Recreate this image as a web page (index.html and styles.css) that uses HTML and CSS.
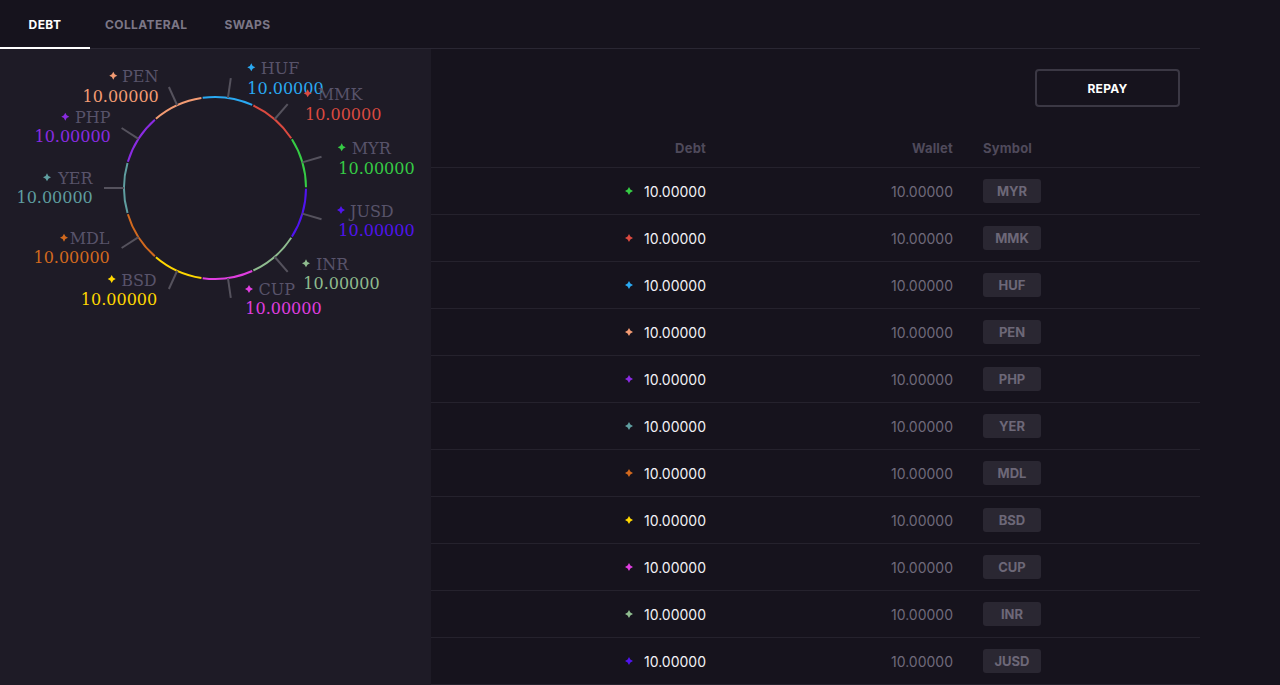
FILE: index.html
```html
<!DOCTYPE html>
<html lang="en">
<head>
<meta charset="utf-8">
<title>Debt</title>
<link rel="stylesheet" href="styles.css">
</head>
<body>
<div class="app">
  <nav class="tabs">
    <div class="tab active">DEBT</div>
    <div class="tab">COLLATERAL</div>
    <div class="tab">SWAPS</div>
  </nav>
  <div class="main">
    <section class="chart-panel">
      <svg class="chart" width="431" height="320" viewBox="0 49 431 320" xmlns="http://www.w3.org/2000/svg">
        <defs>
          <path id="star" d="M0 -4 L1.4 -1.4 L4 0 L1.4 1.4 L0 4 L-1.4 1.4 L-4 0 L-1.4 -1.4 Z"/>
        </defs>
        <g class="arcs" fill="none" stroke-width="2">
          <circle cx="215" cy="188" r="91" pathLength="360" stroke-dasharray="31.93 400" transform="rotate(-32.33 215 188)" stroke="#36cc45"/>
          <circle cx="215" cy="188" r="91" pathLength="360" stroke-dasharray="31.93 400" transform="rotate(-65.05 215 188)" stroke="#db4a40"/>
          <circle cx="215" cy="188" r="91" pathLength="360" stroke-dasharray="31.93 400" transform="rotate(-97.78 215 188)" stroke="#2aa9f2"/>
          <circle cx="215" cy="188" r="91" pathLength="360" stroke-dasharray="31.93 400" transform="rotate(-130.51 215 188)" stroke="#f39b73"/>
          <circle cx="215" cy="188" r="91" pathLength="360" stroke-dasharray="31.93 400" transform="rotate(-163.24 215 188)" stroke="#8a2be2"/>
          <circle cx="215" cy="188" r="91" pathLength="360" stroke-dasharray="31.93 400" transform="rotate(-195.96 215 188)" stroke="#5f9ea0"/>
          <circle cx="215" cy="188" r="91" pathLength="360" stroke-dasharray="31.93 400" transform="rotate(-228.69 215 188)" stroke="#d2691e"/>
          <circle cx="215" cy="188" r="91" pathLength="360" stroke-dasharray="31.93 400" transform="rotate(-261.42 215 188)" stroke="#ffd700"/>
          <circle cx="215" cy="188" r="91" pathLength="360" stroke-dasharray="31.93 400" transform="rotate(-294.15 215 188)" stroke="#e03ee0"/>
          <circle cx="215" cy="188" r="91" pathLength="360" stroke-dasharray="31.93 400" transform="rotate(-326.87 215 188)" stroke="#8fbc8f"/>
          <circle cx="215" cy="188" r="91" pathLength="360" stroke-dasharray="31.93 400" transform="rotate(-359.6 215 188)" stroke="#5014ee"/>
        </g>
        <g class="ticks" stroke="#55525d" stroke-width="2">
          <line x1="215" y1="97" x2="215" y2="77" transform="rotate(73.64 215 188)"/>
          <line x1="215" y1="97" x2="215" y2="77" transform="rotate(40.91 215 188)"/>
          <line x1="215" y1="97" x2="215" y2="77" transform="rotate(8.18 215 188)"/>
          <line x1="215" y1="97" x2="215" y2="77" transform="rotate(-24.55 215 188)"/>
          <line x1="215" y1="97" x2="215" y2="77" transform="rotate(-57.27 215 188)"/>
          <line x1="215" y1="97" x2="215" y2="77" transform="rotate(-90 215 188)"/>
          <line x1="215" y1="97" x2="215" y2="77" transform="rotate(-122.73 215 188)"/>
          <line x1="215" y1="97" x2="215" y2="77" transform="rotate(-155.45 215 188)"/>
          <line x1="215" y1="97" x2="215" y2="77" transform="rotate(171.82 215 188)"/>
          <line x1="215" y1="97" x2="215" y2="77" transform="rotate(139.09 215 188)"/>
          <line x1="215" y1="97" x2="215" y2="77" transform="rotate(106.36 215 188)"/>
        </g>
        <g class="labels">
          <!-- right side -->
          <use href="#star" x="251.3" y="67.3" fill="#2aa9f2"/>
          <text class="lbl-name" x="260.7" y="74">HUF</text>
          <text class="lbl-val" x="247.3" y="93.5" fill="#2aa9f2">10.00000</text>

          <use href="#star" x="307.7" y="93.3" fill="#db4a40"/>
          <text class="lbl-name" x="317.7" y="100">MMK</text>
          <text class="lbl-val" x="305" y="119.5" fill="#db4a40">10.00000</text>

          <use href="#star" x="341.7" y="147.3" fill="#36cc45"/>
          <text class="lbl-name" x="351.7" y="154">MYR</text>
          <text class="lbl-val" x="338.3" y="173.5" fill="#36cc45">10.00000</text>

          <use href="#star" x="341" y="210" fill="#5014ee"/>
          <text class="lbl-name" x="350" y="216.7">JUSD</text>
          <text class="lbl-val" x="338.3" y="236.2" fill="#5014ee">10.00000</text>

          <use href="#star" x="306" y="263.3" fill="#8fbc8f"/>
          <text class="lbl-name" x="316" y="269.5">INR</text>
          <text class="lbl-val" x="303.3" y="289" fill="#8fbc8f">10.00000</text>

          <use href="#star" x="249" y="289" fill="#e03ee0"/>
          <text class="lbl-name" x="258.5" y="294.5">CUP</text>
          <text class="lbl-val" x="245.3" y="314" fill="#e03ee0">10.00000</text>

          <!-- left side -->
          <use href="#star" x="111.7" y="279" fill="#ffd700"/>
          <text class="lbl-name end" x="156.7" y="285.7">BSD</text>
          <text class="lbl-val end" x="157.2" y="305.2" fill="#ffd700">10.00000</text>

          <use href="#star" x="64" y="237.7" fill="#d2691e"/>
          <text class="lbl-name end" x="109.5" y="243.5">MDL</text>
          <text class="lbl-val end" x="109.8" y="263" fill="#d2691e">10.00000</text>

          <use href="#star" x="47" y="177.3" fill="#5f9ea0"/>
          <text class="lbl-name end" x="92.5" y="183.7">YER</text>
          <text class="lbl-val end" x="92.8" y="203.2" fill="#5f9ea0">10.00000</text>

          <use href="#star" x="65.3" y="116.7" fill="#8a2be2"/>
          <text class="lbl-name end" x="110.5" y="122.7">PHP</text>
          <text class="lbl-val end" x="110.8" y="142.2" fill="#8a2be2">10.00000</text>

          <use href="#star" x="113.3" y="75.7" fill="#f39b73"/>
          <text class="lbl-name end" x="158.5" y="82.3">PEN</text>
          <text class="lbl-val end" x="158.8" y="101.8" fill="#f39b73">10.00000</text>
        </g>
      </svg>
    </section>

    <section class="table-panel">
      <div class="toolbar">
        <button class="btn">REPAY</button>
      </div>
      <div class="table">
        <div class="row head">
          <div class="c-debt">Debt</div>
          <div class="c-wallet">Wallet</div>
          <div class="c-sym">Symbol</div>
        </div>

        <div class="row">
          <div class="c-debt"><svg class="dot" width="8" height="8" viewBox="-4 -4 8 8"><path fill="#36cc45" d="M0 -4 L1.4 -1.4 L4 0 L1.4 1.4 L0 4 L-1.4 1.4 L-4 0 L-1.4 -1.4 Z"/></svg>10.00000</div>
          <div class="c-wallet">10.00000</div>
          <div class="c-sym"><span class="badge">MYR</span></div>
        </div>
        <div class="row">
          <div class="c-debt"><svg class="dot" width="8" height="8" viewBox="-4 -4 8 8"><path fill="#db4a40" d="M0 -4 L1.4 -1.4 L4 0 L1.4 1.4 L0 4 L-1.4 1.4 L-4 0 L-1.4 -1.4 Z"/></svg>10.00000</div>
          <div class="c-wallet">10.00000</div>
          <div class="c-sym"><span class="badge">MMK</span></div>
        </div>
        <div class="row">
          <div class="c-debt"><svg class="dot" width="8" height="8" viewBox="-4 -4 8 8"><path fill="#2aa9f2" d="M0 -4 L1.4 -1.4 L4 0 L1.4 1.4 L0 4 L-1.4 1.4 L-4 0 L-1.4 -1.4 Z"/></svg>10.00000</div>
          <div class="c-wallet">10.00000</div>
          <div class="c-sym"><span class="badge">HUF</span></div>
        </div>
        <div class="row">
          <div class="c-debt"><svg class="dot" width="8" height="8" viewBox="-4 -4 8 8"><path fill="#f39b73" d="M0 -4 L1.4 -1.4 L4 0 L1.4 1.4 L0 4 L-1.4 1.4 L-4 0 L-1.4 -1.4 Z"/></svg>10.00000</div>
          <div class="c-wallet">10.00000</div>
          <div class="c-sym"><span class="badge">PEN</span></div>
        </div>
        <div class="row">
          <div class="c-debt"><svg class="dot" width="8" height="8" viewBox="-4 -4 8 8"><path fill="#8a2be2" d="M0 -4 L1.4 -1.4 L4 0 L1.4 1.4 L0 4 L-1.4 1.4 L-4 0 L-1.4 -1.4 Z"/></svg>10.00000</div>
          <div class="c-wallet">10.00000</div>
          <div class="c-sym"><span class="badge">PHP</span></div>
        </div>
        <div class="row">
          <div class="c-debt"><svg class="dot" width="8" height="8" viewBox="-4 -4 8 8"><path fill="#5f9ea0" d="M0 -4 L1.4 -1.4 L4 0 L1.4 1.4 L0 4 L-1.4 1.4 L-4 0 L-1.4 -1.4 Z"/></svg>10.00000</div>
          <div class="c-wallet">10.00000</div>
          <div class="c-sym"><span class="badge">YER</span></div>
        </div>
        <div class="row">
          <div class="c-debt"><svg class="dot" width="8" height="8" viewBox="-4 -4 8 8"><path fill="#d2691e" d="M0 -4 L1.4 -1.4 L4 0 L1.4 1.4 L0 4 L-1.4 1.4 L-4 0 L-1.4 -1.4 Z"/></svg>10.00000</div>
          <div class="c-wallet">10.00000</div>
          <div class="c-sym"><span class="badge">MDL</span></div>
        </div>
        <div class="row">
          <div class="c-debt"><svg class="dot" width="8" height="8" viewBox="-4 -4 8 8"><path fill="#ffd700" d="M0 -4 L1.4 -1.4 L4 0 L1.4 1.4 L0 4 L-1.4 1.4 L-4 0 L-1.4 -1.4 Z"/></svg>10.00000</div>
          <div class="c-wallet">10.00000</div>
          <div class="c-sym"><span class="badge">BSD</span></div>
        </div>
        <div class="row">
          <div class="c-debt"><svg class="dot" width="8" height="8" viewBox="-4 -4 8 8"><path fill="#e03ee0" d="M0 -4 L1.4 -1.4 L4 0 L1.4 1.4 L0 4 L-1.4 1.4 L-4 0 L-1.4 -1.4 Z"/></svg>10.00000</div>
          <div class="c-wallet">10.00000</div>
          <div class="c-sym"><span class="badge">CUP</span></div>
        </div>
        <div class="row">
          <div class="c-debt"><svg class="dot" width="8" height="8" viewBox="-4 -4 8 8"><path fill="#8fbc8f" d="M0 -4 L1.4 -1.4 L4 0 L1.4 1.4 L0 4 L-1.4 1.4 L-4 0 L-1.4 -1.4 Z"/></svg>10.00000</div>
          <div class="c-wallet">10.00000</div>
          <div class="c-sym"><span class="badge">INR</span></div>
        </div>
        <div class="row">
          <div class="c-debt"><svg class="dot" width="8" height="8" viewBox="-4 -4 8 8"><path fill="#5014ee" d="M0 -4 L1.4 -1.4 L4 0 L1.4 1.4 L0 4 L-1.4 1.4 L-4 0 L-1.4 -1.4 Z"/></svg>10.00000</div>
          <div class="c-wallet">10.00000</div>
          <div class="c-sym"><span class="badge">JUSD</span></div>
        </div>
      </div>
    </section>
  </div>
</div>
</body>
</html>
```

FILE: styles.css
```css
html, body {
  margin: 0;
  height: 100%;
  overflow: hidden;
  background: #16131d;
}

body {
  font-family: Inter, "Noto Sans", "Liberation Sans", sans-serif;
  color: #ffffff;
}

.app {
  width: 1200px;
}

.tabs {
  display: flex;
  height: 48px;
  border-bottom: 1px solid #2a2733;
}

.tab {
  position: relative;
  min-width: 90px;
  padding: 0 15px;
  box-sizing: border-box;
  display: flex;
  align-items: center;
  justify-content: center;
  font-size: 12px;
  font-weight: 700;
  color: #7c7787;
  letter-spacing: 0.4px;
}

.tab.active {
  color: #ffffff;
}

.tab.active::after {
  content: "";
  position: absolute;
  left: 0;
  right: 0;
  bottom: -1px;
  height: 2px;
  background: #ffffff;
}

.main {
  display: flex;
  height: 636px;
}

.chart-panel {
  width: 431px;
  flex: none;
  background: #1e1b26;
}

.chart {
  display: block;
}

.lbl-name {
  font-family: "DejaVu Serif", serif;
  font-size: 16px;
  fill: #58536a;
}

.lbl-val {
  font-family: "DejaVu Serif", serif;
  font-size: 16px;
}

.end {
  text-anchor: end;
}

.table-panel {
  flex: 1;
  display: flex;
  flex-direction: column;
}

.toolbar {
  display: flex;
  justify-content: flex-end;
  padding: 20px 20px 0 0;
}

.btn {
  width: 145px;
  height: 38px;
  border: 2px solid #3b3844;
  border-radius: 4px;
  background: transparent;
  color: #ffffff;
  font-family: Inter, "Noto Sans", sans-serif;
  font-size: 12px;
  font-weight: 700;
  letter-spacing: 0.3px;
  cursor: pointer;
}

.table {
  margin-top: 22px;
}

.row {
  display: grid;
  grid-template-columns: 275px 247px 1fr;
  height: 46px;
  align-items: center;
  border-bottom: 1px solid #25222d;
  font-size: 14px;
}

.row.head {
  height: 38px;
  font-size: 13px;
  font-weight: 700;
  color: #4f4a5b;
}

.c-debt {
  display: flex;
  justify-content: flex-end;
  align-items: center;
  gap: 11px;
  color: #f2f1f5;
}

.head .c-debt,
.head .c-wallet,
.head .c-sym {
  color: #4f4a5b;
  letter-spacing: 0.2px;
}

.dot {
  display: block;
}

.c-wallet {
  text-align: right;
  color: #6f6a7b;
}

.c-sym {
  padding-left: 30px;
}

.badge {
  display: inline-flex;
  align-items: center;
  justify-content: center;
  width: 58px;
  height: 24px;
  border-radius: 3px;
  background: #2a2732;
  color: #6d6878;
  font-size: 13px;
  font-weight: 700;
}
```
